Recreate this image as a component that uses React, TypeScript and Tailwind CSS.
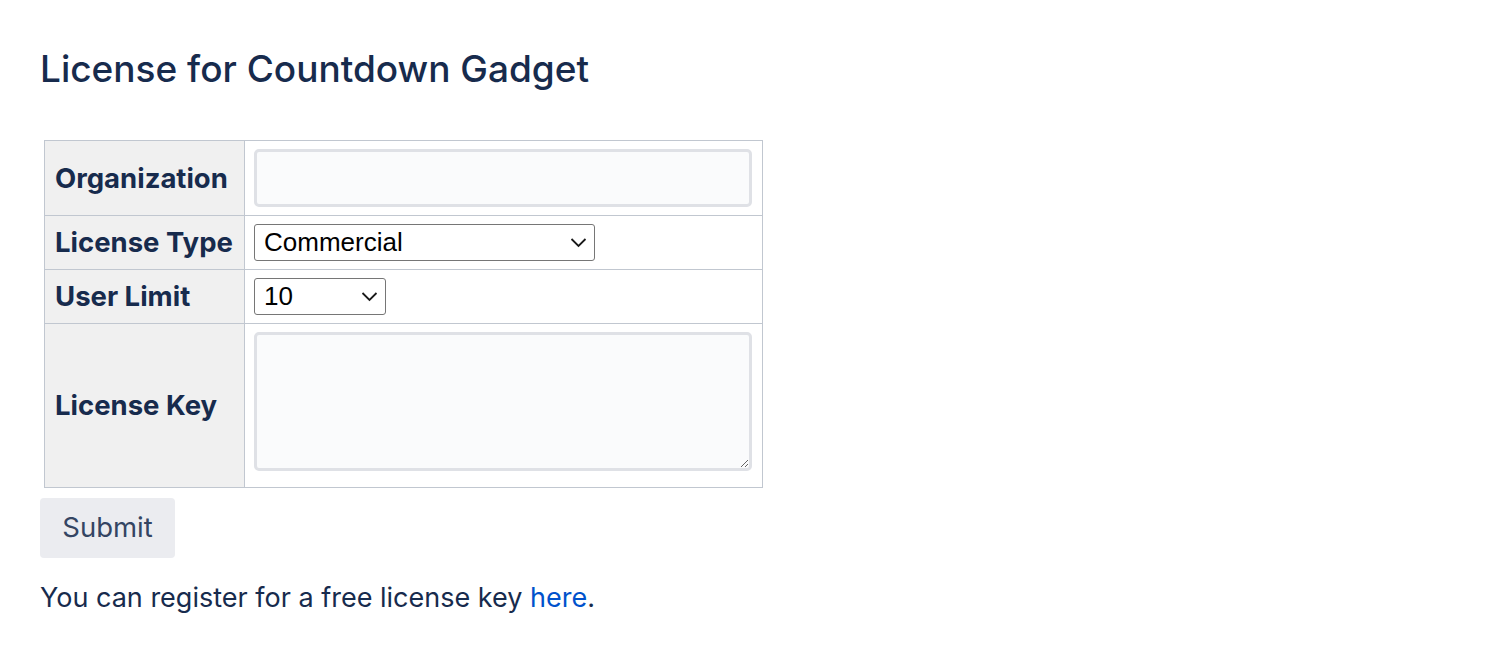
import React, { useState } from 'react';

const licenseTypes = ['Commercial', 'Academic', 'Community', 'Open Source'];
const userLimits = ['10', '25', '50', '100', '250', '500', 'Unlimited'];

const Chevron: React.FC = () => (
  <svg width="17" height="11" viewBox="0 0 17 11" className="pointer-events-none absolute right-[8px] top-1/2 -translate-y-1/2">
    <path d="M1.5 1.5 L8.5 8.5 L15.5 1.5" fill="none" stroke="#1a1a1a" strokeWidth="1.8" />
  </svg>
);

const App: React.FC = () => {
  const [organization, setOrganization] = useState<string>('');
  const [licenseType, setLicenseType] = useState<string>('Commercial');
  const [userLimit, setUserLimit] = useState<string>('10');
  const [licenseKey, setLicenseKey] = useState<string>('');

  const labelCell = 'border border-[#c1c7d0] bg-[#f0f0f0] px-[10px] py-2 text-left text-[27.5px] leading-[1.2] font-bold text-[#172b4d] whitespace-nowrap';
  const valueCell = 'border border-[#c1c7d0] bg-white px-[9px] py-2';

  return (
    <div className="min-h-screen bg-white px-10 pt-[45px] text-[#172b4d]" style={{ fontFamily: 'Inter, "Noto Sans", sans-serif' }}>
      <h1 className="text-[37px] font-medium leading-[48px]">License for Countdown Gadget</h1>

      <form className="mt-[47px]" onSubmit={(e) => e.preventDefault()}>
        <table className="ml-1 border-collapse border border-[#c1c7d0]">
          <tbody>
            <tr className="h-[72px]">
              <th className={`${labelCell} w-[200px]`}>Organization</th>
              <td className={`${valueCell} w-[518px]`}>
                <input
                  type="text"
                  value={organization}
                  onChange={(e) => setOrganization(e.target.value)}
                  className="block h-[58px] w-[498px] rounded-[5px] border-[3px] border-[#dfe1e6] bg-[#fafbfc] px-2 text-[24px] outline-none"
                />
              </td>
            </tr>
            <tr className="h-[54px]">
              <th className={labelCell}>License Type</th>
              <td className={valueCell}>
                <div className="relative w-[341px]">
                  <select
                    value={licenseType}
                    onChange={(e) => setLicenseType(e.target.value)}
                    className="block h-[37px] w-full appearance-none rounded-[3px] border border-[#767676] bg-white pl-[9px] text-[26px] leading-[35px] text-black outline-none"
                    style={{ fontFamily: '"Liberation Sans", Arial, sans-serif' }}
                  >
                    {licenseTypes.map(t => (
                      <option key={t} value={t}>{t}</option>
                    ))}
                  </select>
                  <Chevron />
                </div>
              </td>
            </tr>
            <tr className="h-[54px]">
              <th className={labelCell}>User Limit</th>
              <td className={valueCell}>
                <div className="relative w-[132px]">
                  <select
                    value={userLimit}
                    onChange={(e) => setUserLimit(e.target.value)}
                    className="block h-[37px] w-full appearance-none rounded-[3px] border border-[#767676] bg-white pl-[9px] text-[26px] leading-[35px] text-black outline-none"
                    style={{ fontFamily: '"Liberation Sans", Arial, sans-serif' }}
                  >
                    {userLimits.map(u => (
                      <option key={u} value={u}>{u}</option>
                    ))}
                  </select>
                  <Chevron />
                </div>
              </td>
            </tr>
            <tr className="h-[164px]">
              <th className={labelCell}>License Key</th>
              <td className={`${valueCell} align-top`}>
                <textarea
                  value={licenseKey}
                  onChange={(e) => setLicenseKey(e.target.value)}
                  className="block h-[139px] w-[498px] rounded-[5px] border-[3px] border-[#dfe1e6] bg-[#fafbfc] p-2 text-[24px] outline-none"
                />
              </td>
            </tr>
          </tbody>
        </table>

        <button
          type="submit"
          className="mt-[10px] h-[60px] w-[135px] rounded-[4px] bg-[#ebecf0] text-[27.5px] text-[#344563]"
        >
          Submit
        </button>
      </form>

      <p className="mt-[22px] text-[27px] leading-[36px] text-[#172b4d]">
        You can register for a free license key <a href="#" className="text-[#0052cc]">here</a>.
      </p>
    </div>
  );
};

export default App;
